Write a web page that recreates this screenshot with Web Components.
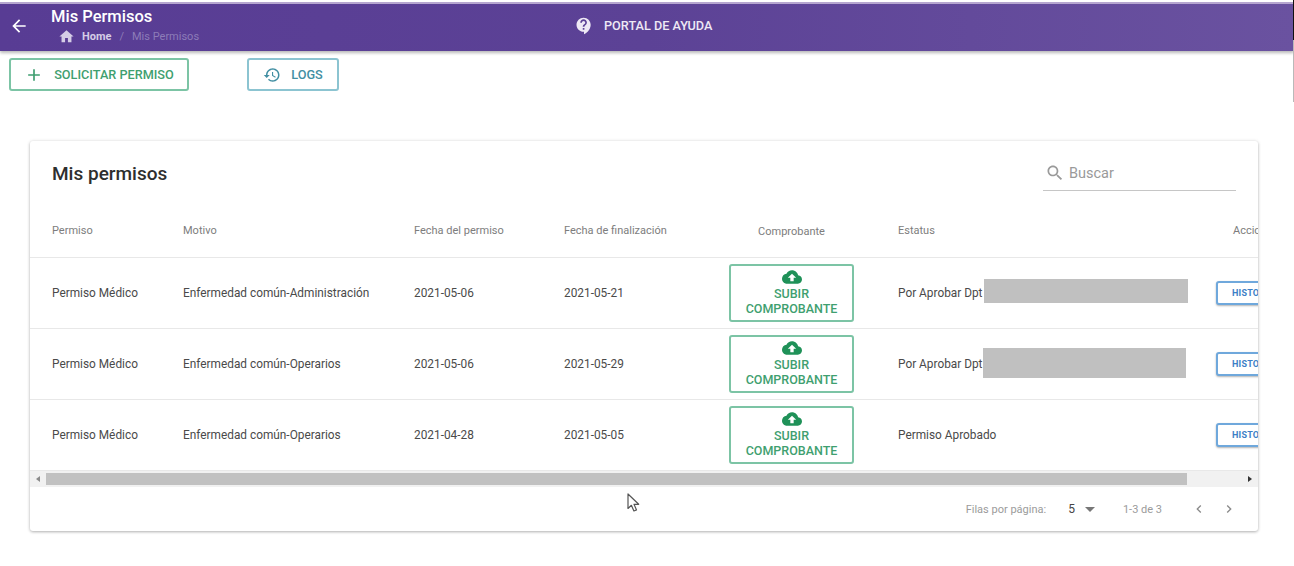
<!DOCTYPE html>
<html lang="es">
<head>
<meta charset="utf-8">
<title>Mis Permisos</title>
<style>
  html, body { margin: 0; height: 100%; background: #fff; overflow: hidden; }
  body { font-family: Roboto, "Liberation Sans", sans-serif; color: #444; position: relative; }
  .cursor { position: absolute; left: 627px; top: 493px; width: 13px; height: 20px; }
  .edge { position: absolute; right: 0; top: 0; width: 1px; height: 102px; background: linear-gradient(#111 0 40px, #b9b9b9 40px); }
</style>
</head>
<body>

<app-header title="Mis Permisos" current="Mis Permisos" help="PORTAL DE AYUDA"></app-header>

<action-bar>
  <outline-button icon="add" size="20" color="#3f9f70" border="#7cc4a5" width="180">SOLICITAR PERMISO</outline-button>
  <outline-button icon="history" size="18" color="#428fa3" border="#8cc4d1" width="92">LOGS</outline-button>
</action-bar>

<permisos-card heading="Mis permisos">
  <permiso-row permiso="Permiso Médico" motivo="Enfermedad común-Administración" inicio="2021-05-06" fin="2021-05-21" estatus="Por Aprobar Dpt" tapa="204,24,2,-4"></permiso-row>
  <permiso-row permiso="Permiso Médico" motivo="Enfermedad común-Operarios" inicio="2021-05-06" fin="2021-05-29" estatus="Por Aprobar Dpt" tapa="203,30,1,-2"></permiso-row>
  <permiso-row permiso="Permiso Médico" motivo="Enfermedad común-Operarios" inicio="2021-04-28" fin="2021-05-05" estatus="Permiso Aprobado"></permiso-row>
</permisos-card>

<svg class="cursor" viewBox="0 0 13 20"><path d="M1 1v14.5l3.4-3.2 2.5 5.7 2.6-1.1-2.5-5.6h4.7z" fill="#fff" stroke="#555" stroke-width="1.2" stroke-linejoin="round"/></svg>
<div class="edge"></div>

<script>
const ICONS = {
  back: 'M20 11H7.83l5.59-5.59L12 4l-8 8 8 8 1.41-1.41L7.83 13H20v-2z',
  home: 'M10 20v-6h4v6h5v-8h3L12 3 2 12h3v8z',
  help: 'M11.5 2C6.81 2 3 5.81 3 10.5S6.81 19 11.5 19h.5v3c4.86-2.34 8-7 8-11.5C20 5.81 16.19 2 11.5 2zm1 14.5h-2v-2h2v2zm0-3.5h-2c0-3.25 3-3 3-5 0-1.1-.9-2-2-2s-2 .9-2 2h-2c0-2.21 1.79-4 4-4s4 1.79 4 4c0 2.5-3 2.75-3 5z',
  add: 'M19 13h-6v6h-2v-6H5v-2h6V5h2v6h6v2z',
  history: 'M13 3c-4.97 0-9 4.03-9 9H1l3.89 3.89.07.14L9 12H6c0-3.87 3.13-7 7-7s7 3.13 7 7-3.13 7-7 7c-1.93 0-3.68-.79-4.94-2.06l-1.42 1.42C8.27 19.99 10.51 21 13 21c4.97 0 9-4.03 9-9s-4.03-9-9-9zm-1 5v5l4.28 2.54.72-1.21-3.5-2.08V8H12z',
  cloud: 'M19.35 10.04C18.67 6.59 15.64 4 12 4 9.11 4 6.6 5.64 5.35 8.04 2.34 8.36 0 10.91 0 14c0 3.31 2.69 6 6 6h13c2.76 0 5-2.24 5-5 0-2.64-2.05-4.78-4.65-4.96zM14 13v4h-4v-4H7l5-5 5 5h-3z',
  search: 'M15.5 14h-.79l-.28-.27C15.41 12.59 16 11.11 16 9.5 16 5.91 13.09 3 9.5 3S3 5.91 3 9.5 5.91 16 9.5 16c1.61 0 3.09-.59 4.23-1.57l.27.28v.79l5 4.99L20.49 19l-4.99-5zm-6 0C7.01 14 5 11.99 5 9.5S7.01 5 9.5 5 14 7.01 14 9.5 11.99 14 9.5 14z',
  drop: 'M7 10l5 5 5-5z',
  prev: 'M15.41 7.41L14 6l-6 6 6 6 1.41-1.41L10.83 12z',
  next: 'M10 6L8.59 7.41 13.17 12l-4.58 4.59L10 18l6-6z'
};
const icon = (name, size, fill = 'currentColor') =>
  `<svg width="${size}" height="${size}" viewBox="0 0 24 24" fill="${fill}" style="display:block;flex:none"><path d="${ICONS[name]}"/></svg>`;

// columnas compartidas entre cabecera y filas
const COLUMNS = 'grid-template-columns: 131px 231px 150px 165px 169px 318px 140px;';

class AppHeader extends HTMLElement {
  connectedCallback() {
    this.attachShadow({ mode: 'open' });
    this.shadowRoot.innerHTML = `
      <style>
        :host {
          display: grid;
          grid-template-columns: 51px 523px auto 1fr;
          align-items: center;
          height: 47px;
          border-top: 2px solid #fff;
          box-shadow: inset 0 2px 0 #b6a6d0, 0 2px 3px rgba(0,0,0,.28);
          padding-top: 2px;
          background: linear-gradient(90deg, #583c94, #5c4296 50%, #6a52a0);
          color: #fff;
          position: relative;
        }
        .back { padding-left: 9px; margin-top: -4px; }
        .title { font-size: 16.5px; font-weight: 500; line-height: 18px; margin-top: -3px; }
        .crumbs { display: flex; align-items: center; font-size: 11px; margin: 2px 0 0 7px; color: #8d7cb8; }
        .crumbs svg { color: #d5cde6; margin-right: 7px; }
        .crumbs b { color: #d5cde6; font-weight: 700; }
        .crumbs i { font-style: normal; margin: 0 8px; }
        .help { display: flex; align-items: center; gap: 10px; font-size: 12.7px; font-weight: 500; color: #eee9f5; margin-top: -4px; }
      </style>
      <div class="back">${icon('back', 20)}</div>
      <div>
        <div class="title">${this.getAttribute('title')}</div>
        <div class="crumbs">${icon('home', 17)}<b>Home</b><i>/</i><span>${this.getAttribute('current')}</span></div>
      </div>
      <div class="help">${icon('help', 20)}<span>${this.getAttribute('help')}</span></div>
      <div></div>`;
  }
}

class ActionBar extends HTMLElement {
  constructor() {
    super();
    this.attachShadow({ mode: 'open' });
    this.shadowRoot.innerHTML = `
      <style>:host { display: flex; gap: 58px; padding: 7px 9px 0; }</style>
      <slot></slot>`;
  }
}

class OutlineButton extends HTMLElement {
  connectedCallback() {
    this.attachShadow({ mode: 'open' });
    const c = this.getAttribute('color');
    this.shadowRoot.innerHTML = `
      <style>
        :host {
          display: flex; align-items: center; justify-content: center; gap: 10px;
          box-sizing: border-box; height: 33px; width: ${this.getAttribute('width')}px;
          border: 2px solid ${this.getAttribute('border')}; border-radius: 3px;
          color: ${c}; font-size: 12.7px; font-weight: 500;
        }
      </style>
      ${icon(this.getAttribute('icon'), this.getAttribute('size'))}<slot></slot>`;
  }
}

class PermisosCard extends HTMLElement {
  connectedCallback() {
    this.attachShadow({ mode: 'open' });
    const heads = ['Permiso', 'Motivo', 'Fecha del permiso', 'Fecha de finalización', 'Comprobante', 'Estatus', 'Acciones'];
    this.shadowRoot.innerHTML = `
      <style>
        :host {
          display: block; box-sizing: border-box; height: 390px; width: 1228px;
          margin: 50px 0 0 30px; background: #fff; border-radius: 3px; overflow: hidden;
          box-shadow: 0 1px 3px rgba(0,0,0,.28), 0 0 4px rgba(0,0,0,.07);
        }
        .top { display: flex; justify-content: space-between; height: 72px; padding: 0 22px; }
        h2 { margin: 21px 0 0; font-size: 19px; line-height: 24px; font-weight: 500; color: #2e2e2e; }
        .search {
          display: flex; align-items: center; gap: 4px; box-sizing: border-box;
          width: 193px; height: 35px; margin-top: 15px; padding-left: 2px;
          border-bottom: 1px solid #c6c6c6; color: #9a9a9a; font-size: 14.5px;
        }
        .head {
          display: grid; ${COLUMNS} height: 44px; align-items: center;
          padding-left: 22px; font-size: 11px; color: #7d7d7d; white-space: nowrap;
          border-bottom: 1px solid #e8e8e8;
        }
        .head span { margin-top: -9px; }
        .head span:nth-child(5) { text-align: center; width: 125px; margin-top: -8px; }
        .head span:nth-child(7) { padding-left: 17px; }
      </style>
      <div class="top">
        <h2>${this.getAttribute('heading')}</h2>
        <div class="search">${icon('search', 20, '#9a9a9a')}<span>Buscar</span></div>
      </div>
      <div class="head">${heads.map(h => `<span>${h}</span>`).join('')}</div>
      <slot></slot>
      <table-scrollbar></table-scrollbar>
      <table-pagination></table-pagination>`;
  }
}

class PermisoRow extends HTMLElement {
  connectedCallback() {
    this.attachShadow({ mode: 'open' });
    const a = n => this.getAttribute(n);
    let tapa = '';
    if (a('tapa')) {
      const [w, h, m, t] = a('tapa').split(',');
      tapa = `<i style="width:${w}px;height:${h}px;margin:${t}px 0 0 ${m}px"></i>`;
    }
    this.shadowRoot.innerHTML = `
      <style>
        :host {
          display: grid; ${COLUMNS} align-items: center; height: 70px;
          padding-left: 22px; border-bottom: 1px solid #e8e8e8; font-size: 11.85px; color: #4a4a4a; white-space: nowrap;
        }
        .estatus { display: flex; align-items: center; }
        i { display: block; background: #c0c0c0; }
        .hist {
          box-sizing: border-box; width: 60px; height: 24px; line-height: 20px; padding-left: 14px;
          border: 2px solid #6fa8dc; border-radius: 3px; font-size: 9px; font-weight: 700; color: #3d7fc6;
          letter-spacing: .2px; box-shadow: 0 1px 2px rgba(0,0,0,.3); background: #fff;
        }
      </style>
      <span>${a('permiso')}</span>
      <span>${a('motivo')}</span>
      <span>${a('inicio')}</span>
      <span>${a('fin')}</span>
      <upload-button>SUBIR<br>COMPROBANTE</upload-button>
      <span class="estatus">${a('estatus')}${tapa}</span>
      <span class="hist">HISTORIAL</span>`;
  }
}

class UploadButton extends HTMLElement {
  constructor() {
    super();
    this.attachShadow({ mode: 'open' });
    this.shadowRoot.innerHTML = `
      <style>
        :host {
          display: flex; flex-direction: column; align-items: center; box-sizing: border-box;
          width: 125px; height: 58px; padding-top: 1px;
          border: 2px solid #7cc4a5; border-radius: 3px;
          color: #3f9f70; font-size: 12.5px; line-height: 15px; font-weight: 500; text-align: center;
        }
        svg { margin-bottom: -1px; }
      </style>
      ${icon('cloud', 20, '#1f9158')}
      <div><slot></slot></div>`;
  }
}

class TableScrollbar extends HTMLElement {
  constructor() {
    super();
    this.attachShadow({ mode: 'open' });
    this.shadowRoot.innerHTML = `
      <style>
        :host {
          display: grid; grid-template-columns: 16px 1141px 1fr 16px; align-items: center;
          height: 16px; background: #f1f1f1;
        }
        .thumb { height: 12px; background: #c1c1c1; }
        .l, .r { width: 0; height: 0; border: 3px solid transparent; justify-self: center; }
        .l { border-right: 4px solid #8a8a8a; border-left: 0; }
        .r { border-left: 4px solid #333; border-right: 0; }
      </style>
      <div class="l"></div><div class="thumb"></div><div></div><div class="r"></div>`;
  }
}

class TablePagination extends HTMLElement {
  constructor() {
    super();
    this.attachShadow({ mode: 'open' });
    this.shadowRoot.innerHTML = `
      <style>
        :host {
          display: flex; justify-content: flex-end; align-items: center; height: 44px;
          padding-right: 21px; font-size: 11px; color: #9b9b9b;
        }
        .size { color: #444; font-size: 12px; margin-left: 22px; }
        .drop { margin: 0 21px 0 3px; color: #777; }
        .prev { margin-left: 29px; color: #8a8a8a; }
        .next { margin-left: 14px; color: #8a8a8a; }
      </style>
      <span>Filas por página:</span>
      <span class="size">5</span>
      <span class="drop">${icon('drop', 24)}</span>
      <span>1-3 de 3</span>
      <span class="prev">${icon('prev', 16)}</span>
      <span class="next">${icon('next', 16)}</span>`;
  }
}

customElements.define('app-header', AppHeader);
customElements.define('action-bar', ActionBar);
customElements.define('outline-button', OutlineButton);
customElements.define('upload-button', UploadButton);
customElements.define('table-scrollbar', TableScrollbar);
customElements.define('table-pagination', TablePagination);
customElements.define('permiso-row', PermisoRow);
customElements.define('permisos-card', PermisosCard);
</script>
</body>
</html>
